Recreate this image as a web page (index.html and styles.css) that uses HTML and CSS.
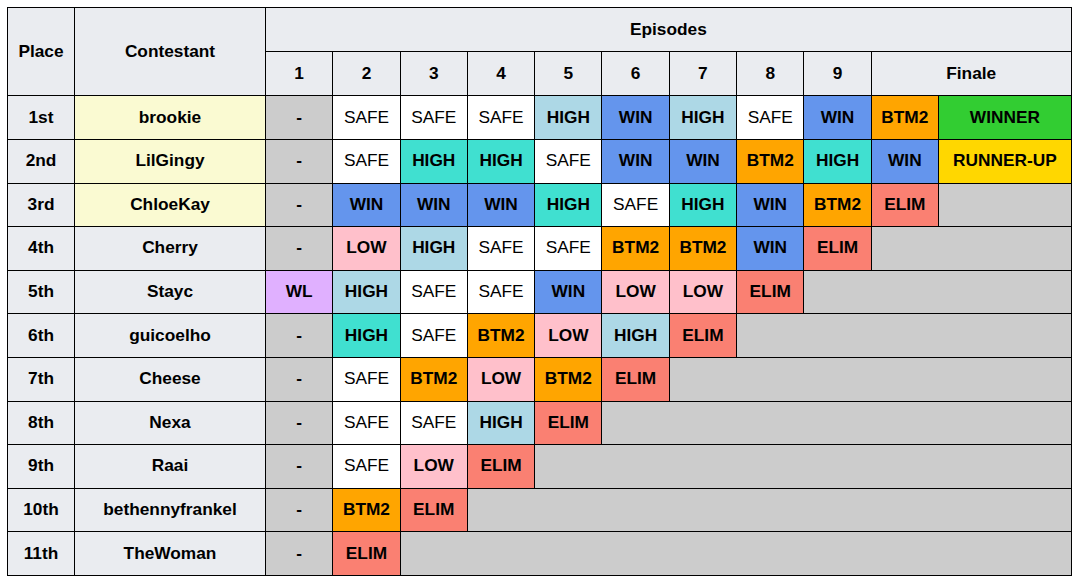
FILE: index.html
```html
<!DOCTYPE html>
<html>
<head>
<meta charset="utf-8">
<link rel="stylesheet" href="styles.css">
</head>
<body>
<table class="results">
  <colgroup>
    <col class="c-place"><col class="c-name">
    <col class="c-ep"><col class="c-ep"><col class="c-ep"><col class="c-ep"><col class="c-ep">
    <col class="c-ep"><col class="c-ep"><col class="c-ep"><col class="c-ep"><col class="c-ep">
    <col class="c-final">
  </colgroup>
  <thead>
    <tr class="hrow">
      <th rowspan="2">Place</th>
      <th rowspan="2">Contestant</th>
      <th colspan="11">Episodes</th>
    </tr>
    <tr class="hrow">
      <th>1</th><th>2</th><th>3</th><th>4</th><th>5</th><th>6</th><th>7</th><th>8</th><th>9</th>
      <th colspan="2">Finale</th>
    </tr>
  </thead>
  <tbody>
    <tr>
      <th>1st</th><td class="top">brookie</td>
      <td class="na">-</td><td class="safe">SAFE</td><td class="safe">SAFE</td><td class="safe">SAFE</td><td class="high">HIGH</td><td class="win">WIN</td><td class="high">HIGH</td><td class="safe">SAFE</td><td class="win">WIN</td><td class="btm">BTM2</td><td class="winner">WINNER</td>
    </tr>
    <tr>
      <th>2nd</th><td class="top">LilGingy</td>
      <td class="na">-</td><td class="safe">SAFE</td><td class="thigh">HIGH</td><td class="thigh">HIGH</td><td class="safe">SAFE</td><td class="win">WIN</td><td class="win">WIN</td><td class="btm">BTM2</td><td class="thigh">HIGH</td><td class="win">WIN</td><td class="runner">RUNNER-UP</td>
    </tr>
    <tr>
      <th>3rd</th><td class="top">ChloeKay</td>
      <td class="na">-</td><td class="win">WIN</td><td class="win">WIN</td><td class="win">WIN</td><td class="thigh">HIGH</td><td class="safe">SAFE</td><td class="thigh">HIGH</td><td class="win">WIN</td><td class="btm">BTM2</td><td class="elim">ELIM</td><td class="na"></td>
    </tr>
    <tr>
      <th>4th</th><td class="plain">Cherry</td>
      <td class="na">-</td><td class="low">LOW</td><td class="high">HIGH</td><td class="safe">SAFE</td><td class="safe">SAFE</td><td class="btm">BTM2</td><td class="btm">BTM2</td><td class="win">WIN</td><td class="elim">ELIM</td><td class="na" colspan="2"></td>
    </tr>
    <tr>
      <th>5th</th><td class="plain">Stayc</td>
      <td class="wl">WL</td><td class="high">HIGH</td><td class="safe">SAFE</td><td class="safe">SAFE</td><td class="win">WIN</td><td class="low">LOW</td><td class="low">LOW</td><td class="elim">ELIM</td><td class="na" colspan="3"></td>
    </tr>
    <tr>
      <th>6th</th><td class="plain">guicoelho</td>
      <td class="na">-</td><td class="thigh">HIGH</td><td class="safe">SAFE</td><td class="btm">BTM2</td><td class="low">LOW</td><td class="high">HIGH</td><td class="elim">ELIM</td><td class="na" colspan="4"></td>
    </tr>
    <tr>
      <th>7th</th><td class="plain">Cheese</td>
      <td class="na">-</td><td class="safe">SAFE</td><td class="btm">BTM2</td><td class="low">LOW</td><td class="btm">BTM2</td><td class="elim">ELIM</td><td class="na" colspan="5"></td>
    </tr>
    <tr>
      <th>8th</th><td class="plain">Nexa</td>
      <td class="na">-</td><td class="safe">SAFE</td><td class="safe">SAFE</td><td class="high">HIGH</td><td class="elim">ELIM</td><td class="na" colspan="6"></td>
    </tr>
    <tr>
      <th>9th</th><td class="plain">Raai</td>
      <td class="na">-</td><td class="safe">SAFE</td><td class="low">LOW</td><td class="elim">ELIM</td><td class="na" colspan="7"></td>
    </tr>
    <tr>
      <th>10th</th><td class="plain">bethennyfrankel</td>
      <td class="na">-</td><td class="btm">BTM2</td><td class="elim">ELIM</td><td class="na" colspan="8"></td>
    </tr>
    <tr>
      <th>11th</th><td class="plain">TheWoman</td>
      <td class="na">-</td><td class="elim">ELIM</td><td class="na" colspan="9"></td>
    </tr>
  </tbody>
</table>
</body>
</html>
```
FILE: styles.css
```css
html, body {
  margin: 0;
  padding: 0;
  background: #ffffff;
}
body {
  padding: 7px 0 0 7px;
  font-family: "Liberation Sans", Arial, sans-serif;
  font-size: 17.3px;
  color: #000;
}
.results {
  border-collapse: collapse;
  table-layout: fixed;
  width: 1063px;
  border: 1px solid #000;
}
.c-place { width: 67px; }
.c-name { width: 191px; }
.c-ep { width: 67.3px; }
.c-final { width: 132.7px; }
.results th,
.results td {
  border: 1px solid #000;
  padding: 0 0 1px 0;
  text-align: center;
  vertical-align: middle;
  font-weight: bold;
}
.results th {
  background: #eaecf0;
}
.hrow { height: 44.2px; }
.results tbody tr { height: 43.6px; }
.top { background: #fafad2; }
.plain { background: #eaecf0; }
.na { background: #cccccc; }
.safe { background: #ffffff; font-weight: normal !important; }
.high { background: #add8e6; }
.thigh { background: #40e0d0; }
.win { background: #6495ed; }
.btm { background: #ffa500; }
.elim { background: #fa8072; }
.low { background: #ffc0cb; }
.wl { background: #e0b0ff; }
.winner { background: #32cd32; }
.runner { background: #ffd700; }
```
